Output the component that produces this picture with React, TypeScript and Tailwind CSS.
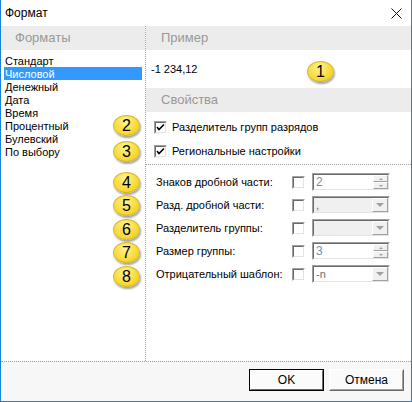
import React from "react";

const formats = ["Стандарт", "Числовой", "Денежный", "Дата", "Время", "Процентный", "Булевский", "По выбору"];

const badges = [
  { n: 1, x: 306, y: 61 },
  { n: 2, x: 112, y: 115 },
  { n: 3, x: 112, y: 141 },
  { n: 4, x: 112, y: 172 },
  { n: 5, x: 112, y: 195 },
  { n: 6, x: 112, y: 219 },
  { n: 7, x: 112, y: 242 },
  { n: 8, x: 112, y: 266 },
];

function Badge({ n, x, y }: { n: number; x: number; y: number }) {
  return (
    <div
      className="absolute w-[27px] h-[21px] rounded-[50%] border border-[#d8b92c] bg-[radial-gradient(ellipse_at_45%_30%,#fff29a,#f9dc3c_55%,#efc515)] shadow-[1px_2px_2px_rgba(0,0,0,0.35)] flex items-center justify-center text-[16px] leading-none text-black"
      style={{ left: x, top: y }}
    >
      {n}
    </div>
  );
}

function Sunken({ children, className = "" }: { children?: React.ReactNode; className?: string }) {
  return (
    <div className={"border border-t-[#a0a0a0] border-l-[#a0a0a0] border-r-white border-b-white " + className}>
      <div className="h-full w-full border border-t-[#696969] border-l-[#696969] border-r-[#e3e3e3] border-b-[#e3e3e3]">
        {children}
      </div>
    </div>
  );
}

function CheckBox({ checked }: { checked?: boolean }) {
  return (
    <Sunken className="w-[13px] h-[13px] shrink-0 bg-white">
      {checked && (
        <svg width="9" height="9" viewBox="0 0 9 9" className="block">
          <path d="M1 4 L3 6.5 L8 1.5" stroke="#000" strokeWidth="1.6" fill="none" />
        </svg>
      )}
    </Sunken>
  );
}

function Spin({ value }: { value: string }) {
  return (
    <Sunken className="w-[78px] h-[18px] bg-white">
      <div className="flex h-full">
        <div className="flex-1 pl-[2px] text-[12px] leading-[14px] text-[#7a8ca3]">{value}</div>
        <div className="w-[15px] flex flex-col">
          <div className="flex-1 bg-[#f0f0f0] border border-t-white border-l-white border-r-[#a0a0a0] border-b-[#a0a0a0] flex items-center justify-center">
            <div className="w-0 h-0 border-x-[2px] border-x-transparent border-b-[2px] border-b-[#a0a0a0]" />
          </div>
          <div className="flex-1 bg-[#f0f0f0] border border-t-white border-l-white border-r-[#a0a0a0] border-b-[#a0a0a0] flex items-center justify-center">
            <div className="w-0 h-0 border-x-[2px] border-x-transparent border-t-[2px] border-t-[#a0a0a0]" />
          </div>
        </div>
      </div>
    </Sunken>
  );
}

function Combo({ value, enabled }: { value: string; enabled?: boolean }) {
  return (
    <Sunken className={"w-[78px] h-[18px] " + (enabled ? "bg-white" : "bg-[#f0f0f0]")}>
      <div className="flex h-full">
        <div className="flex-1 pl-[2px] text-[11px] leading-[14px] text-[#6d6d6d]">{value}</div>
        <div className="w-[16px] bg-[#f0f0f0] border border-t-white border-l-white border-r-[#a0a0a0] border-b-[#a0a0a0] flex items-center justify-center">
          <div className="w-0 h-0 border-x-[4px] border-x-transparent border-t-[4px] border-t-[#a0a0a0]" />
        </div>
      </div>
    </Sunken>
  );
}

function Button({ label, def }: { label: string; def?: boolean }) {
  return (
    <div className={"w-[75px] h-[22px] " + (def ? "border border-black" : "border border-t-white border-l-white border-r-[#696969] border-b-[#696969]")}>
      <div className={"h-full w-full bg-[#fbfbfb] border flex items-center justify-center text-[12px] text-black " + (def ? "border-t-white border-l-white border-r-[#696969] border-b-[#696969]" : "border-t-[#fbfbfb] border-l-[#fbfbfb] border-r-[#a0a0a0] border-b-[#a0a0a0]")}>
        {label}
      </div>
    </div>
  );
}

const fields = [
  { label: "Знаков дробной части:", kind: "spin", value: "2" },
  { label: "Разд. дробной части:", kind: "combo", value: "," },
  { label: "Разделитель группы:", kind: "combo", value: "" },
  { label: "Размер группы:", kind: "spin", value: "3" },
  { label: "Отрицательный шаблон:", kind: "combo2", value: "-n" },
];

export default function App() {
  return (
    <div className="relative w-[412px] h-[402px] bg-white border-x border-b border-[#1883d7] flex flex-col font-['Liberation_Sans',Arial,sans-serif] text-black overflow-hidden">
      {/* заголовок окна */}
      <div className="h-[26px] shrink-0 flex items-center justify-between pl-[4px] pr-[9px]">
        <span className="text-[12px]">Формат</span>
        <svg width="11" height="11" viewBox="0 0 11 11">
          <path d="M0.5 0.5 L10.5 10.5 M10.5 0.5 L0.5 10.5" stroke="#111" strokeWidth="1" />
        </svg>
      </div>

      <div className="flex flex-1 min-h-0">
        {/* список форматов */}
        <div className="w-[145px] shrink-0 border-r border-dotted border-[#a0a0a0] flex flex-col">
          <div className="h-[24px] bg-[#ececec] pl-[14px] flex items-center text-[13px] text-[#999]">Форматы</div>
          <div className="pt-[4px] px-[3px] flex flex-col">
            {formats.map((f, i) => (
              <div
                key={f}
                className={"h-[13px] pl-[1px] text-[11px] leading-[14px] " + (i === 1 ? "bg-[#3399ff] text-white" : "")}
              >
                {f}
              </div>
            ))}
          </div>
        </div>

        {/* свойства */}
        <div className="flex-1 flex flex-col">
          <div className="h-[24px] bg-[#ececec] pl-[15px] flex items-center text-[13px] text-[#999]">Пример</div>
          <div className="h-[38px] pl-[5px] flex items-center text-[11px]">-1 234,12</div>
          <div className="h-[24px] bg-[#ececec] pl-[15px] flex items-center text-[13px] text-[#999]">Свойства</div>
          <div className="flex flex-col pl-[8px] pt-[9px] gap-[11px]">
            <div className="flex items-center gap-[5px] h-[13px]">
              <CheckBox checked />
              <span className="text-[11px]">Разделитель групп разрядов</span>
            </div>
            <div className="flex items-center gap-[5px] h-[13px]">
              <CheckBox checked />
              <span className="text-[11px]">Региональные настройки</span>
            </div>
          </div>
          <div className="mt-[6px] border-t border-dotted border-[#a0a0a0] pt-[8px] pl-[10px] flex flex-col gap-[5px]">
            {fields.map((f) => (
              <div key={f.label} className="flex items-center h-[18px]">
                <span className="w-[136px] text-[11px] whitespace-nowrap">{f.label}</span>
                <CheckBox />
                <div className="ml-[7px]">
                  {f.kind === "spin" ? (
                    <Spin value={f.value} />
                  ) : (
                    <Combo value={f.value} enabled={f.kind === "combo2"} />
                  )}
                </div>
              </div>
            ))}
          </div>
        </div>
      </div>

      {/* кнопки */}
      <div className="h-[40px] shrink-0 border-t border-dotted border-[#a0a0a0] bg-[#f7f7f7] flex justify-end items-start pt-[7px] pr-[7px] gap-[5px]">
        <Button label="OK" def />
        <Button label="Отмена" />
      </div>

      {badges.map((b) => (
        <Badge key={b.n} {...b} />
      ))}
    </div>
  );
}
